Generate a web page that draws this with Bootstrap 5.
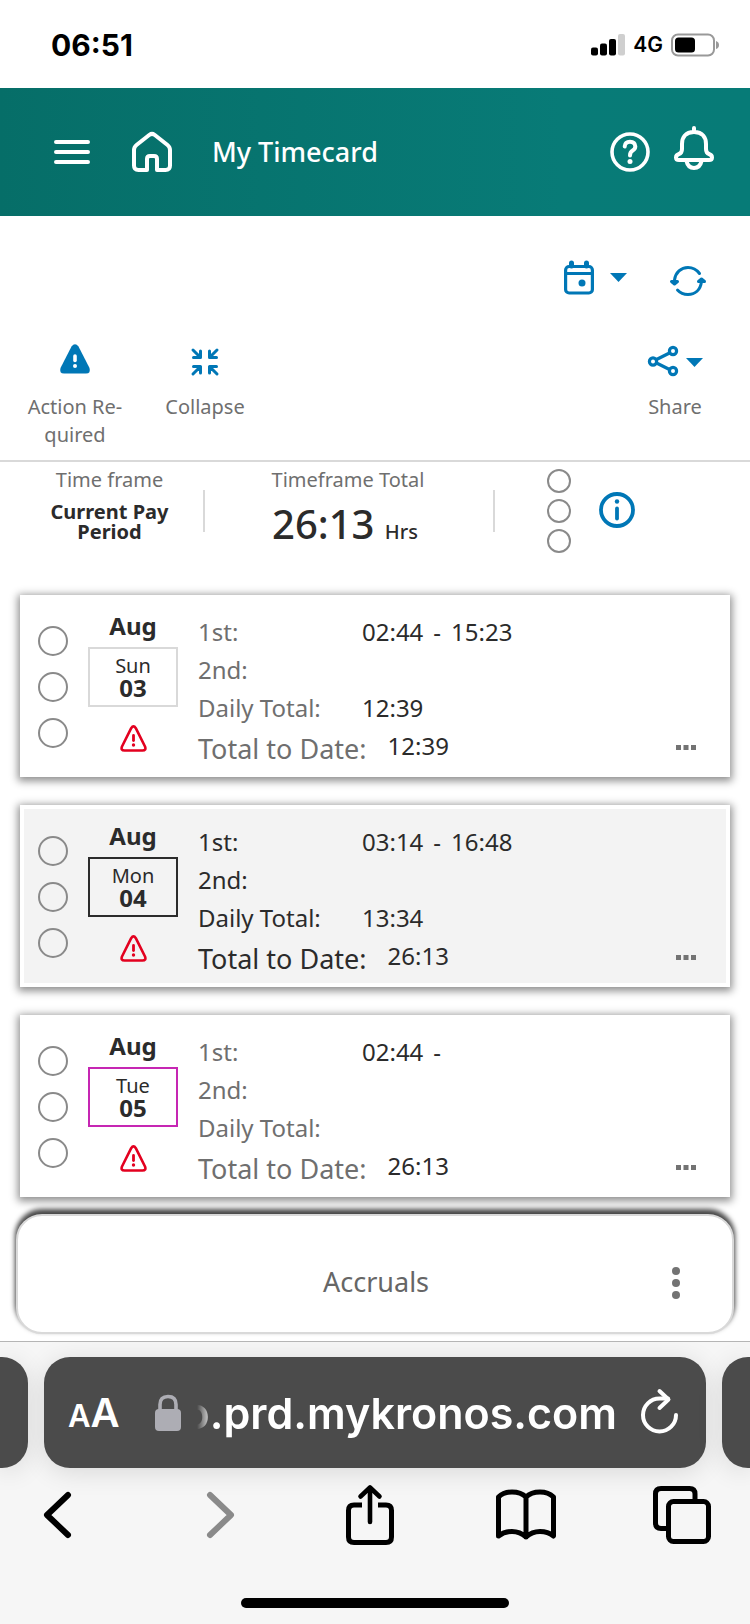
<!DOCTYPE html>
<html lang="en">
<head>
<meta charset="utf-8">
<meta name="viewport" content="width=device-width, initial-scale=1">
<title>My Timecard</title>
<link href="https://cdn.jsdelivr.net/npm/bootstrap@5.3.0/dist/css/bootstrap.min.css" rel="stylesheet">
<style>
  :root { --tc-blue: #0077b6; --tc-grey: #6f6f6f; --tc-ink: #2b2b2b; --tc-line: #d9d9d9; }
  body { font-family: "Noto Sans", "Open Sans", sans-serif; font-size: 24px; color: var(--tc-ink); background: #fff; }
  svg { display: block; flex: none; overflow: visible; }
  button { background: none; border: 0; padding: 0; color: inherit; }
  .stroke-icon { fill: none; stroke: currentColor; stroke-linecap: round; stroke-linejoin: round; }

  .status-bar { height: 88px; padding: 2px 31px 0 51px; font-family: Inter, "Liberation Sans", sans-serif; color: #000; }
  .clock { font-size: 30px; font-weight: 700; }
  .network { font-size: 21px; font-weight: 600; }

  .app-header { height: 128px; padding: 0 36px 0 54px; color: #fff; background: linear-gradient(90deg, #066e68, #087b77 75%, #077b77); }
  .home-link { margin-left: 42px; }
  .app-title { font-size: 27px; font-weight: 500; margin-left: 40px; }

  .period-tools { height: 128px; padding: 44px 44px 0 0; color: var(--tc-blue); }
  .period-tools .refresh { margin: 0 3px 0 45px; }
  .action-tools { padding: 0 20px 11px 20px; color: var(--tc-grey); border-bottom: 2px solid var(--tc-line); }
  .tool { font-size: 20px; line-height: 28px; width: 110px; }
  .tool .tool-icon { height: 49px; color: var(--tc-blue); }
  .tool-next { margin-left: 20px; }

  .summary { display: grid; grid-template-columns: 203fr 290fr 257fr; height: 133px; padding-top: 6px; }
  .summary-cell { font-size: 20px; line-height: 24px; text-align: center; }
  .summary-cell .caption-text { color: var(--tc-grey); }
  .split { position: relative; }
  .split::after { content: ""; position: absolute; right: -2px; top: 22px; height: 42px; width: 2px; background: var(--tc-line); }
  .period-name { font-weight: 700; line-height: 20px; margin-top: 10px; }
  .grand-total { font-size: 40px; line-height: 40px; font-weight: 500; margin-top: 12px; padding-right: 6px; }
  .grand-total .unit { font-size: 20px; }
  .ring { display: block; flex: none; border: 2px solid #8a8a8a; border-radius: 50%; width: 30px; height: 30px; }
  .ring-sm { width: 24px; height: 24px; }
  .rings-sm { gap: 6px; margin-left: 6px; padding-top: 1px; }

  .days { padding: 0 20px; gap: 28px; }
  .day { background: #fff; box-shadow: 0 2px 8px 2px rgba(0,0,0,.45); padding: 0 34px 6px 18px; gap: 20px; }
  .day.selected { background: #f3f3f3; box-shadow: inset 0 0 0 4px #fff, 0 2px 8px 2px rgba(0,0,0,.45); }
  .rings { gap: 16px; padding-top: 31px; }
  .date-col { width: 90px; padding-top: 15px; text-align: center; }
  .month { font-weight: 700; line-height: 32px; }
  .date-box { border: 2px solid var(--tc-line); margin: 5px 0 18px; padding: 5px 0 7px; background: #fff; }
  .selected .date-box { border-color: var(--tc-ink); background: transparent; }
  .today .date-box { border-color: #c626b3; }
  .weekday { font-size: 20px; line-height: 24px; }
  .day-number { font-weight: 700; line-height: 20px; }
  .alert-icon { color: #e3001f; }
  .hours { padding-top: 18px; line-height: 38px; min-width: 0; }
  .hours .name { width: 164px; color: var(--tc-grey); }
  .hours .name-total { font-size: 27px; line-height: 44px; color: var(--tc-grey); margin-right: 21px; }
  .selected .name, .selected .name-total { color: var(--tc-ink); }
  .span-dash { margin: 0 10px; }

  .accruals { position: relative; margin: 17px 16px 7px; height: 120px; border: 2px solid var(--tc-line); border-radius: 26px; background: #fff; box-shadow: 0 -4px 5px 1px rgba(0,0,0,.72); padding: 17px 50px 0 64px; font-size: 27px; color: #666; }

  .browser { border-top: 1px solid #b5b5b5; background: #f6f6f6; font-family: Inter, "Liberation Sans", sans-serif; color: #000; overflow: hidden; }
  .pill-row { gap: 16px; padding-top: 15px; }
  .pill { height: 111px; background: #4b4b4b; color: #fff; border-radius: 26px; box-shadow: 0 4px 26px rgba(0,0,0,.12); }
  .pill-edge { width: 28px; flex: none; }
  .pill-edge.left { border-radius: 0 26px 26px 0; }
  .pill-edge.right { border-radius: 26px 0 0 26px; }
  .pill-main { padding: 0 27px 0 24px; min-width: 0; }
  .text-size { font-weight: 600; font-size: 40px; line-height: 48px; padding-top: 4px; }
  .text-size .smaller { font-size: 31px; }
  .address { flex: 0 1 420px; font-size: 43px; line-height: 56px; font-weight: 600; white-space: nowrap; overflow: hidden; min-width: 0; display: flex; justify-content: flex-end;
    -webkit-mask-image: linear-gradient(90deg, transparent, #000 16px); mask-image: linear-gradient(90deg, transparent, #000 16px); }
  .nav-row { padding: 17px 38px 0 27px; }
  .nav-row button { width: 60px; }
  .home-bar { width: 268px; height: 10px; border-radius: 5px; background: #000; margin: 53px auto 16px; }
</style>
</head>
<body>

<svg width="0" height="0" class="position-absolute" aria-hidden="true">
  <defs>
    <symbol id="warn" viewBox="0 0 27 27">
      <path d="M11.2 3.2Q13.500 -.4 15.800 3.200L25 21.500Q26.500 25.500 22.500 25.500H4.500Q.5 25.500 2 21.500Z" fill="none" stroke="currentColor" stroke-width="2.600" stroke-linejoin="round"/>
      <path d="M13.500 10.500V15.500" stroke="currentColor" stroke-width="2.800" stroke-linecap="round"/>
      <circle cx="13.500" cy="20" r="1.700" fill="currentColor"/>
    </symbol>
    <symbol id="dots" viewBox="0 0 20 5">
      <path d="M0 0h5v5H0zM7.500 0h5v5h-5zM15 0h5v5h-5z" fill="#737373"/>
    </symbol>
    <symbol id="caret" viewBox="0 0 17 9"><path d="M0 0H17L8.500 9Z" fill="currentColor"/></symbol>
  </defs>
</svg>

<div class="status-bar d-flex align-items-center">
  <span class="clock">06:51</span>
  <svg class="ms-auto" width="34" height="22" viewBox="0 0 34 22" aria-hidden="true">
    <rect x="0" y="13.500" width="7" height="8" rx="2"/><rect x="9" y="9.500" width="7" height="12" rx="2"/><rect x="18" y="5" width="7" height="16.500" rx="2"/><rect x="27" y="0" width="7" height="21.500" rx="2" fill="#cfcfcf"/>
  </svg>
  <span class="network ms-2 me-2">4G</span>
  <svg width="48" height="24" viewBox="0 0 48 24" aria-hidden="true">
    <rect x="1" y="1.500" width="42" height="21" rx="6" fill="none" stroke="#999" stroke-width="2"/>
    <rect x="4" y="4.500" width="20" height="15" rx="3.500"/><path d="M45 8q3 1 3 4t-3 4z" fill="#999"/>
  </svg>
</div>

<header class="app-header d-flex align-items-center">
  <button type="button" aria-label="Menu">
    <svg class="stroke-icon" width="36" height="24" viewBox="0 0 36 24" stroke-width="4"><path d="M2 2H34M2 12H34M2 22H34"/></svg>
  </button>
  <button type="button" class="home-link" aria-label="Home">
    <svg class="stroke-icon" width="40" height="40" viewBox="0 0 40 40" stroke-width="4"><path d="M17.500 2.800Q20 1 22.500 2.800L35.500 13Q38 15 38 18V33.500Q38 38 33.500 38H25V27Q25 24 22 24H18Q15 24 15 27V38H6.500Q2 38 2 33.500V18Q2 15 4.500 13Z"/></svg>
  </button>
  <h1 class="app-title mb-0">My Timecard</h1>
  <button type="button" class="ms-auto me-4" aria-label="Help">
    <svg class="stroke-icon" width="40" height="40" viewBox="0 0 40 40" stroke-width="3.600"><circle cx="20" cy="20" r="18"/><path d="M14.700 14.500Q15 9.800 20 9.800T25.300 14.500Q25.300 17 22.700 18.500Q20 20 20 23.500" stroke-width="4"/><circle cx="20" cy="29.500" r="2.500" fill="#fff" stroke="none"/></svg>
  </button>
  <button type="button" class="mb-2" aria-label="Notifications">
    <svg class="stroke-icon" width="40" height="44" viewBox="0 0 40 44" stroke-width="4"><path d="M20 2V6M20 6C11 6 8 12 8 18V23Q8 27 5 28Q2 29 2 31.500Q2 34 5 34H35Q38 34 38 31.500Q38 29 35 28Q32 27 32 23V18C32 12 29 6 20 6ZM12.500 35Q14 42 20 42T27.500 35"/></svg>
  </button>
</header>

<main>
  <div class="period-tools d-flex justify-content-end align-items-start">
    <button type="button" class="d-flex align-items-center" aria-label="Select time frame">
      <svg class="stroke-icon" width="30" height="35" viewBox="0 0 30 35" stroke-width="3.200"><rect x="1.600" y="6.500" width="26.800" height="26.500" rx="3.500"/><path d="M2 13.500H28"/><path d="M7.500 3V6M22.500 3V6" stroke-width="5"/><circle cx="18" cy="23" r="3.500" fill="currentColor" stroke="none"/></svg>
      <svg width="17" height="9" class="ms-3"><use href="#caret"/></svg>
    </button>
    <button type="button" class="refresh pt-2" aria-label="Refresh">
      <svg class="stroke-icon" width="31" height="28" viewBox="2 2 31 28" stroke-width="3"><path d="M4.500 14C5.500 6.500 11 1.500 18 1.500Q25 1.500 29.500 7.500"/><path d="M31.500 15.500C30.500 24 25 28.500 18 28.500Q11.500 28.500 7.500 24"/><path d="M1.500 15.500H7.500L4.500 18ZM28.500 15.500H34.500L31.500 13Z" stroke-width="3"/></svg>
    </button>
  </div>

  <div class="action-tools d-flex align-items-start">
    <button type="button" class="tool d-flex flex-column align-items-center">
      <span class="tool-icon"><svg width="30" height="30" viewBox="0 0 30 30"><path d="M11.500 2.500Q15 -2 18.500 2.500L29.500 24Q31 29.500 26 29.500H4Q-1 29.500 .5 24Z" fill="currentColor"/><path d="M15 12V16.500" stroke="#fff" stroke-width="3.600" stroke-linecap="round"/><circle cx="15" cy="22" r="2" fill="#fff"/></svg></span>
      <span>Action Re-<br>quired</span>
    </button>
    <button type="button" class="tool tool-next d-flex flex-column align-items-center">
      <span class="tool-icon pt-1"><svg class="stroke-icon" width="28" height="28" viewBox="0 0 28 28" stroke-width="3"><path d="M2 2L9 9M9.500 3V9.500H2.500M26 2L19 9M18.500 3V9.500H25.500M2 26L9 19M9.500 25V18.500H2.500M26 26L19 19M18.500 25V18.500H25.500"/></svg></span>
      <span>Collapse</span>
    </button>
    <button type="button" class="tool d-flex flex-column align-items-center ms-auto me-n3">
      <span class="tool-icon d-flex align-items-start gap-2"><svg class="stroke-icon" width="30" height="32" viewBox="0 -2 30 32" stroke-width="3.200"><circle cx="5" cy="15.500" r="3.600"/><circle cx="25" cy="5" r="3.600"/><circle cx="25" cy="25" r="3.600"/><path d="M8.500 13.500L21.500 7M8.500 17L21.500 23.500"/></svg>
      <svg width="17" height="32" viewBox="0 -14 17 32"><path d="M0 0H17L8.500 9Z" fill="currentColor"/></svg></span>
      <span>Share</span>
    </button>
  </div>

  <section class="summary">
    <div class="summary-cell split ps-3">
      <div class="caption-text">Time frame</div>
      <div class="period-name">Current Pay<br>Period</div>
    </div>
    <div class="summary-cell split">
      <div class="caption-text">Timeframe Total</div>
      <div class="grand-total">26:13 <span class="unit">Hrs</span></div>
    </div>
    <div class="summary-cell d-flex align-items-start ps-5">
      <div class="rings-sm d-flex flex-column"><span class="ring ring-sm"></span><span class="ring ring-sm"></span><span class="ring ring-sm"></span></div>
      <button type="button" class="ms-4 mt-4 ps-1" aria-label="Information">
        <svg class="stroke-icon" width="36" height="36" viewBox="0 0 36 36" stroke-width="3.800" color="#0077b6"><circle cx="18" cy="18" r="16"/><path d="M18 16.500V26.500"/><circle cx="18" cy="9.500" r="2.200" fill="currentColor" stroke="none"/></svg>
      </button>
    </div>
  </section>

  <section class="days d-flex flex-column">
    <article class="day d-flex">
      <div class="rings d-flex flex-column"><span class="ring"></span><span class="ring"></span><span class="ring"></span></div>
      <div class="date-col">
        <div class="month">Aug</div>
        <div class="date-box"><div class="weekday">Sun</div><div class="day-number">03</div></div>
        <svg class="alert-icon mx-auto" width="27" height="27"><use href="#warn"/></svg>
      </div>
      <div class="hours flex-grow-1">
        <div class="d-flex"><div class="name">1st:</div><div>02:44<span class="span-dash">-</span>15:23</div></div>
        <div class="d-flex"><div class="name">2nd:</div></div>
        <div class="d-flex"><div class="name">Daily Total:</div><div>12:39</div></div>
        <div class="d-flex"><div class="name-total">Total to Date:</div><div>12:39</div>
          <button type="button" class="ms-auto pb-1" aria-label="More"><svg width="20" height="5"><use href="#dots"/></svg></button></div>
      </div>
    </article>

    <article class="day selected d-flex">
      <div class="rings d-flex flex-column"><span class="ring"></span><span class="ring"></span><span class="ring"></span></div>
      <div class="date-col">
        <div class="month">Aug</div>
        <div class="date-box"><div class="weekday">Mon</div><div class="day-number">04</div></div>
        <svg class="alert-icon mx-auto" width="27" height="27"><use href="#warn"/></svg>
      </div>
      <div class="hours flex-grow-1">
        <div class="d-flex"><div class="name">1st:</div><div>03:14<span class="span-dash">-</span>16:48</div></div>
        <div class="d-flex"><div class="name">2nd:</div></div>
        <div class="d-flex"><div class="name">Daily Total:</div><div>13:34</div></div>
        <div class="d-flex"><div class="name-total">Total to Date:</div><div>26:13</div>
          <button type="button" class="ms-auto pb-1" aria-label="More"><svg width="20" height="5"><use href="#dots"/></svg></button></div>
      </div>
    </article>

    <article class="day today d-flex">
      <div class="rings d-flex flex-column"><span class="ring"></span><span class="ring"></span><span class="ring"></span></div>
      <div class="date-col">
        <div class="month">Aug</div>
        <div class="date-box"><div class="weekday">Tue</div><div class="day-number">05</div></div>
        <svg class="alert-icon mx-auto" width="27" height="27"><use href="#warn"/></svg>
      </div>
      <div class="hours flex-grow-1">
        <div class="d-flex"><div class="name">1st:</div><div>02:44<span class="span-dash">-</span></div></div>
        <div class="d-flex"><div class="name">2nd:</div></div>
        <div class="d-flex"><div class="name">Daily Total:</div></div>
        <div class="d-flex"><div class="name-total">Total to Date:</div><div>26:13</div>
          <button type="button" class="ms-auto pb-1" aria-label="More"><svg width="20" height="5"><use href="#dots"/></svg></button></div>
      </div>
    </article>
  </section>

  <section class="accruals d-flex align-items-center">
    <span class="flex-grow-1 text-center">Accruals</span>
    <button type="button" aria-label="Accruals options"><svg width="12" height="32" viewBox="-2 0 12 32" fill="#737373"><circle cx="4" cy="4" r="4"/><circle cx="4" cy="16" r="4"/><circle cx="4" cy="28" r="4"/></svg></button>
  </section>
</main>

<footer class="browser">
  <div class="pill-row d-flex">
    <div class="pill pill-edge left"></div>
    <div class="pill pill-main flex-grow-1 d-flex align-items-center">
      <button type="button" class="text-size" aria-label="Text size"><span class="smaller">A</span>A</button>
      <svg class="ms-auto" width="26" height="36" viewBox="0 0 26 36" fill="#adadb4" aria-hidden="true"><rect y="14" width="26" height="22" rx="4"/><path d="M5 16V9.500Q5 1.500 13 1.500T21 9.500V16" fill="none" stroke="#adadb4" stroke-width="3.600"/></svg>
      <button type="button" class="address ms-3">o.prd.mykronos.com</button>
      <button type="button" class="ms-4" aria-label="Reload">
        <svg class="stroke-icon" width="38" height="46" viewBox="0 0 38 46" stroke-width="4"><path d="M35 25A16.500 16.500 0 1 1 18.500 8.500H27"/><path d="M18.500 1L27.500 9.500L18.500 18"/></svg>
      </button>
    </div>
    <div class="pill pill-edge right"></div>
  </div>

  <nav class="nav-row d-flex align-items-center justify-content-between">
    <button type="button" aria-label="Back"><svg class="stroke-icon mx-auto" width="28" height="48" viewBox="0 0 28 48" stroke-width="6"><path d="M25 4L4 24L25 44"/></svg></button>
    <button type="button" aria-label="Forward"><svg class="stroke-icon ms-auto me-2" width="28" height="48" viewBox="0 0 28 48" color="#8a8a8a" stroke-width="6"><path d="M3 4L24 24L3 44"/></svg></button>
    <button type="button" aria-label="Share page"><svg class="stroke-icon mx-auto" width="48" height="60" viewBox="0 0 48 60" stroke-width="5"><path d="M16 20H8Q2.500 20 2.500 25.500V52Q2.500 57.500 8 57.500H40Q45.500 57.500 45.500 52V25.500Q45.500 20 40 20H32" stroke-linecap="butt"/><path d="M24 3V37M14.500 11.500L24 2.500L33.500 11.500" stroke-width="4.600"/></svg></button>
    <button type="button" aria-label="Bookmarks"><svg class="stroke-icon mx-auto" width="60" height="52" viewBox="0 0 60 52" stroke-width="5"><path d="M30 48V8Q25 3 16 3Q7.500 3 2.500 8V47Q8 42.500 16 42.500T30 48Q36 42.500 44 42.500T57.500 47V8Q52.500 3 44 3Q35 3 30 8"/></svg></button>
    <button type="button" aria-label="Tabs"><svg class="stroke-icon mx-auto" width="58" height="58" viewBox="0 0 58 58" stroke-width="5"><path d="M42 15V8Q42 2.500 36.500 2.500H8Q2.500 2.500 2.500 8V37Q2.500 42.500 8 42.500H14"/><rect x="15.500" y="15.500" width="40" height="40" rx="5"/></svg></button>
  </nav>
  <div class="home-bar"></div>
</footer>

<script src="https://cdn.jsdelivr.net/npm/bootstrap@5.3.0/dist/js/bootstrap.bundle.min.js"></script>
</body>
</html>
